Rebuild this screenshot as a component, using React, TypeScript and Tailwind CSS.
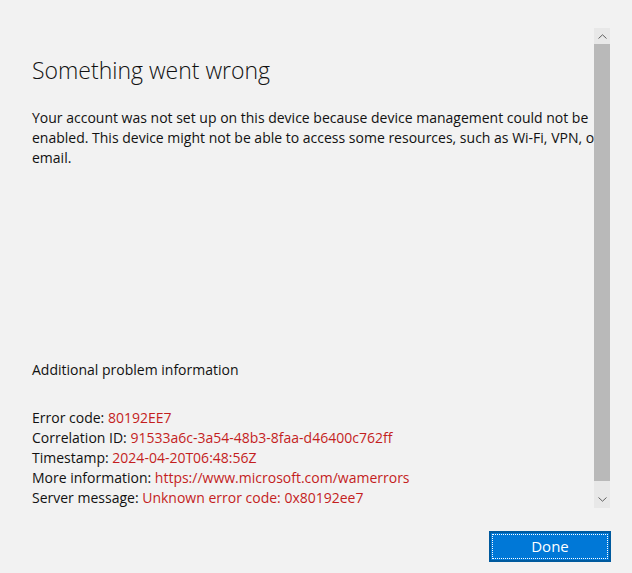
import React from "react";

const details: Array<[string, string]> = [
  ["Error code:", "80192EE7"],
  ["Correlation ID:", "91533a6c-3a54-48b3-8faa-d46400c762ff"],
  ["Timestamp:", "2024-04-20T06:48:56Z"],
  ["More information:", "https://www.microsoft.com/wamerrors"],
  ["Server message:", "Unknown error code: 0x80192ee7"],
];

function ScrollBar() {
  return (
    <div className="w-[16px] mr-[22px] flex flex-col bg-[#e8e8e8]">
      <div className="h-[16px] flex items-center justify-center">
        <svg width="9" height="5" viewBox="0 0 9 5">
          <path d="M0.5 4.5 L4.5 0.8 L8.5 4.5" fill="none" stroke="#606060" strokeWidth="1" />
        </svg>
      </div>
      <div className="h-[437px] bg-[#b9b9b9]" />
      <div className="flex-1 flex items-end justify-center pb-[6px]">
        <svg width="9" height="5" viewBox="0 0 9 5">
          <path d="M0.5 0.5 L4.5 4.2 L8.5 0.5" fill="none" stroke="#606060" strokeWidth="1" />
        </svg>
      </div>
    </div>
  );
}

export default function App() {
  return (
    <div className="w-[632px] h-[573px] bg-[#f2f2f2] flex flex-col font-['Open_Sans',sans-serif] text-[#111]">
      <div className="flex pt-[28px] h-[508px]">
        <div className="flex-1 overflow-hidden pl-[32px] pt-[26px]">
          <h1 className="text-[23px] leading-[32px] font-light whitespace-nowrap">
            Something went wrong
          </h1>
          <p className="mt-[22px] text-[14px] leading-[20px] whitespace-nowrap">
            Your account was not set up on this device because device management could not be
            <br />
            enabled. This device might not be able to access some resources, such as Wi-Fi, VPN, or
            <br />
            email.
          </p>
          <div className="mt-[192px] text-[14px] leading-[20px] whitespace-nowrap">
            Additional problem information
          </div>
          <div className="mt-[28px] text-[14px] leading-[20px] whitespace-nowrap">
            {details.map(([label, value]) => (
              <div key={label}>
                {label} <span className="text-[#c41e1e]">{value}</span>
              </div>
            ))}
          </div>
        </div>
        <ScrollBar />
      </div>
      <div className="flex justify-end pr-[21px] pt-[23px]">
        <button className="w-[122px] h-[31px] bg-[#0078d7] border-2 border-[#005a9e] p-[1px] text-white text-[15px]">
          <div className="w-full h-full border border-dotted border-white flex items-center justify-center">
            Done
          </div>
        </button>
      </div>
    </div>
  );
}
